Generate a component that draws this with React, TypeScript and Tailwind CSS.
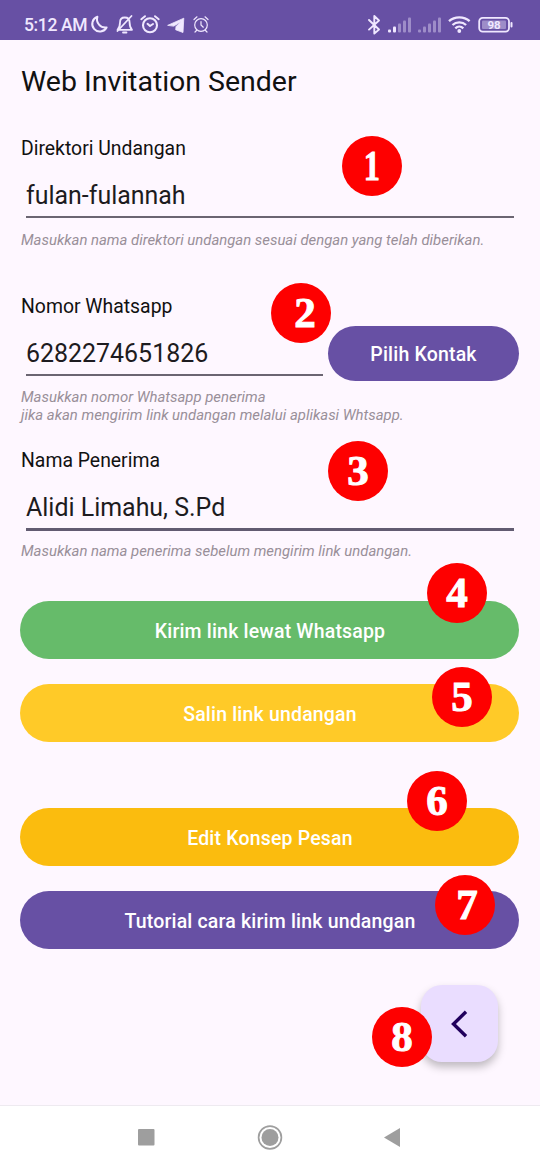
import type { ReactNode } from "react";

function StatusBar() {
  return (
    <header className="flex h-10 shrink-0 items-start bg-[#6750a4] pl-6 text-[#f0e8ff]">
      <span className="mt-[14px] w-[66px] whitespace-nowrap text-[17.5px] leading-[22px] font-medium tracking-[-0.35px]">5:12 AM</span>
      <svg className="mt-[14px]" width="122" height="22" viewBox="0 0 122 22" fill="none" stroke="currentColor" strokeWidth="2" strokeLinejoin="round" strokeLinecap="round">
        <path d="M7.400 2.800a7.600 7.600 0 1 0 9.200 10.700A8.300 8.300 0 0 1 7.400 2.800Z" />
        <path d="M27.500 15.800h14.500c-1.800-1.900-2.400-3.300-2.400-7.300 0-3-1.800-5-4.800-5s-4.800 2-4.800 5c0 4-.7 5.400-2.500 7.300ZM33 18.500h3.500M41.500 2 27.500 17" strokeWidth="1.800" />
        <circle cx="60" cy="11.200" r="7" strokeWidth="2.100" />
        <path d="m57.500 9.800 2.500 2.200 3-2M51.300 5.200l3.700-3M68.700 5.200 65 2.200" />
        <path d="M78 11.200 93.800 4.200l-.8 14.300-7.300-2.700.3-3.200 5-5-7 4.400Z" fill="currentColor" stroke="currentColor" strokeWidth=".8" />
        <circle cx="111" cy="11" r="6.300" strokeWidth="1.200" />
        <path d="M111 7.500V11l2.300 2.200M104 5.500l3-2.700M118 5.500l-3-2.700M106.500 16.500 105 18M115.500 16.500 117 18" strokeWidth="1.200" />
      </svg>
      <svg className="mt-[13px] ml-[154px]" width="150" height="24" viewBox="0 0 150 24" fill="none" stroke="currentColor" strokeLinecap="round" strokeLinejoin="round">
        <path d="m3 7 10 9.500-4.700 4.100V3L13 7.500 3 16.600" strokeWidth="1.900" />
        <g fill="currentColor" stroke="none">
          <rect x="22" y="16.500" width="3" height="3" rx="1" />
          <rect x="27" y="13.500" width="3" height="6" rx="1" />
          <g opacity=".4">
            <rect x="32" y="10.500" width="3" height="9" rx="1" />
            <rect x="37" y="7.500" width="3" height="12" rx="1" />
            <rect x="42" y="4.500" width="3" height="15" rx="1" />
            <rect x="52" y="16.500" width="3" height="3" rx="1" />
            <rect x="57" y="13.500" width="3" height="6" rx="1" />
            <rect x="62" y="10.500" width="3" height="9" rx="1" />
            <rect x="67" y="7.500" width="3" height="12" rx="1" />
            <rect x="72" y="4.500" width="3" height="15" rx="1" />
          </g>
        </g>
        <path d="M83 8.200c5.600-5.200 15-5.200 20.600 0M86.500 12c3.700-3.400 9.900-3.400 13.600 0" strokeWidth="2.300" strokeLinecap="butt" />
        <path d="M89.300 15.400c2.300-2.300 5.700-2.300 8 0" strokeWidth="2.200" strokeLinecap="butt" />
        <circle cx="93.300" cy="18" r="1.900" fill="currentColor" stroke="none" />
        <rect x="113.200" y="4.800" width="29.800" height="13.800" rx="3.500" strokeWidth="1.800" />
        <rect x="116" y="7.500" width="24" height="8.500" rx="1" fill="currentColor" stroke="none" opacity=".4" />
        <path d="M145.500 10v3.500" strokeWidth="2" />
        <text x="128" y="16" textAnchor="middle" fontSize="11.500" fontWeight="700" fill="currentColor" stroke="none">98</text>
      </svg>
    </header>
  );
}

function Label({ children }: { children: ReactNode }) {
  return <label className="block h-6 text-[19.4px] leading-[26px] whitespace-nowrap text-[#111]">{children}</label>;
}

function Field({ value, focused = false }: { value: string; focused?: boolean }) {
  return (
    <div className={focused ? "mx-[5px] h-[59px] border-b-3 border-[#625b71]" : "mx-[5px] h-[58px] border-b-2 border-[#6b6572]"}>
      <span className="block pt-[18px] text-[24.95px] leading-[35px] whitespace-nowrap text-[#1d1b20]">{value}</span>
    </div>
  );
}

function Hint({ children }: { children: ReactNode }) {
  return <p className="text-[14.9px] leading-[17.5px] whitespace-nowrap text-[#998f99] italic">{children}</p>;
}

function Pill({ className, children }: { className: string; children: ReactNode }) {
  return (
    <button className={`flex items-center justify-center rounded-full text-[19.5px] font-medium tracking-[0.18px] whitespace-nowrap text-white ${className}`}>
      {children}
    </button>
  );
}

function Badge({ n, className, digit = "" }: { n: number; className: string; digit?: string }) {
  return (
    <div className={`absolute flex size-[60px] items-center justify-center rounded-full bg-[#fe0000] pb-0.5 ${className}`}>
      <span className={`font-['Liberation_Serif',serif] text-[43px] leading-none font-bold text-white [-webkit-text-stroke:1px_white] ${digit}`}>{n}</span>
    </div>
  );
}

function NavigationBar() {
  return (
    <nav className="flex h-[65px] shrink-0 items-center justify-center border-t border-[#eeeaf0] bg-white">
      <svg className="-mt-0.5" width="270" height="28" viewBox="0 0 270 28" fill="#9e9e9e">
        <rect x="3" y="6" width="16.500" height="16.500" rx="1" />
        <circle cx="135" cy="14.500" r="11.400" fill="none" stroke="#9e9e9e" strokeWidth="1.700" />
        <circle cx="135" cy="14.500" r="8.500" />
        <path d="M249 14.500 265 5v19Z" />
      </svg>
    </nav>
  );
}

export default function App() {
  return (
    <div className="relative flex h-[1170px] w-[540px] flex-col overflow-hidden bg-[#fef7ff] font-[Roboto,sans-serif]">
      <StatusBar />
      <main className="flex flex-1 flex-col px-[21px] pt-6">
        <h1 className="h-9 text-[28.5px] leading-[36px] tracking-[-0.02px] whitespace-nowrap text-[#111]">Web Invitation Sender</h1>

        <section className="mt-9 h-[158px]">
          <Label>Direktori Undangan</Label>
          <Field value="fulan-fulannah" />
          <div className="mt-3.5"><Hint>Masukkan nama direktori undangan sesuai dengan yang telah diberikan.</Hint></div>
        </section>

        <section className="h-[154px]">
          <Label>Nomor Whatsapp</Label>
          <div className="flex h-[71px] items-start">
            <div className="w-[307px]"><Field value="6282274651826" /></div>
            <Pill className="mt-2 h-[55px] flex-1 bg-[#6750a4] pt-0.5">Pilih Kontak</Pill>
          </div>
          <Hint>Masukkan nomor Whatsapp penerima<br />jika akan mengirim link undangan melalui aplikasi Whtsapp.</Hint>
        </section>

        <section className="h-[153px]">
          <Label>Nama Penerima</Label>
          <Field value="Alidi Limahu, S.Pd" focused />
          <div className="mt-3"><Hint>Masukkan nama penerima sebelum mengirim link undangan.</Hint></div>
        </section>

        <div className="-ml-px flex flex-col">
          <Pill className="h-[58px] bg-[#66bb6a] pt-1 pl-px">Kirim link lewat Whatsapp</Pill>
          <Pill className="mt-[25px] h-[58px] bg-[#ffca28] pt-1 pl-px">Salin link undangan</Pill>
          <Pill className="mt-[66px] h-[58px] bg-[#fbbc0e] pt-1 pl-px">Edit Konsep Pesan</Pill>
          <Pill className="mt-[25px] h-[58px] bg-[#6750a4] pt-1 pl-px">Tutorial cara kirim link undangan</Pill>
        </div>

        <button className="mt-9 mr-[21px] flex size-[77px] items-center justify-center self-end rounded-[21px] bg-[#eaddff] shadow-[0_5px_9px_rgba(0,0,0,0.25)]">
          <svg className="-ml-0.5" width="24" height="32" viewBox="0 0 24 32" fill="none" stroke="#21005d" strokeWidth="3.400">
            <path d="M19 3.800 6.500 16 19 28.200" />
          </svg>
        </button>
      </main>
      <NavigationBar />

      <Badge n={1} className="top-[136px] left-[342px]" digit="scale-x-75" />
      <Badge n={2} className="top-[283px] left-[271px]" digit="ml-2" />
      <Badge n={3} className="top-[441px] left-[328px]" />
      <Badge n={4} className="top-[563px] left-[427px]" />
      <Badge n={5} className="top-[667px] left-[432px]" />
      <Badge n={6} className="top-[771px] left-[407px]" />
      <Badge n={7} className="top-[875px] left-[435px]" digit="ml-1" />
      <Badge n={8} className="top-[1007px] left-[372px]" />
    </div>
  );
}
